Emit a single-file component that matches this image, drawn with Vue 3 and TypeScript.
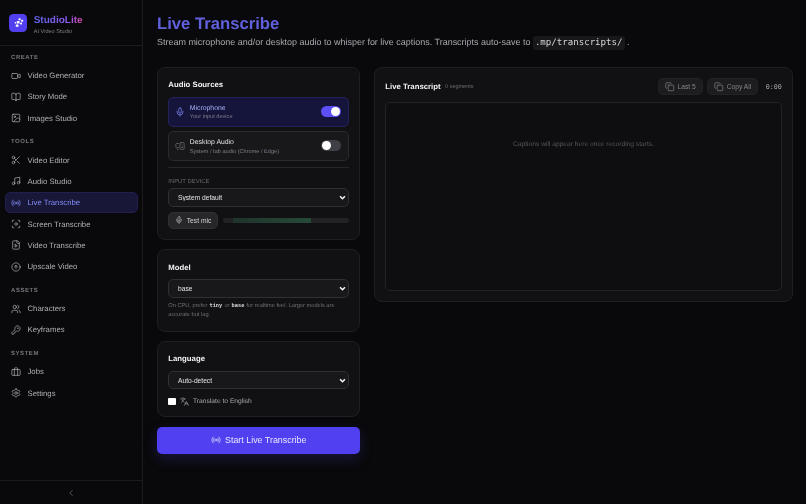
<script setup lang="ts">
const icons: Record<string, string> = {
  video: '<path d="m16 13 5.223 3.482a.5.5 0 0 0 .777-.416V7.87a.5.5 0 0 0-.752-.432L16 10.5"/><rect x="2" y="6" width="14" height="12" rx="2"/>',
  book: '<path d="M12 7v14"/><path d="M3 18a1 1 0 0 1-1-1V4a1 1 0 0 1 1-1h5a4 4 0 0 1 4 4 4 4 0 0 1 4-4h5a1 1 0 0 1 1 1v13a1 1 0 0 1-1 1h-6a3 3 0 0 0-3 3 3 3 0 0 0-3-3z"/>',
  image: '<rect width="18" height="18" x="3" y="3" rx="2"/><circle cx="9" cy="9" r="2"/><path d="m21 15-3.086-3.086a2 2 0 0 0-2.828 0L6 21"/>',
  scissors: '<circle cx="6" cy="6" r="3"/><path d="M8.12 8.12 12 12"/><path d="M20 4 8.12 15.88"/><circle cx="6" cy="18" r="3"/><path d="M14.8 14.8 20 20"/>',
  music: '<path d="M9 18V5l12-2v13"/><circle cx="6" cy="18" r="3"/><circle cx="18" cy="16" r="3"/>',
  radio: '<path d="M4.9 19.1C1 15.2 1 8.8 4.9 4.9"/><path d="M7.8 16.2c-2.3-2.3-2.3-6.1 0-8.5"/><circle cx="12" cy="12" r="2"/><path d="M16.2 7.8c2.3 2.3 2.3 6.1 0 8.5"/><path d="M19.1 4.9C23 8.8 23 15.1 19.1 19"/>',
  scan: '<path d="M3 7V5a2 2 0 0 1 2-2h2"/><path d="M17 3h2a2 2 0 0 1 2 2v2"/><path d="M21 17v2a2 2 0 0 1-2 2h-2"/><path d="M7 21H5a2 2 0 0 1-2-2v-2"/><circle cx="12" cy="12" r="3"/>',
  file: '<path d="M15 2H6a2 2 0 0 0-2 2v16a2 2 0 0 0 2 2h12a2 2 0 0 0 2-2V7Z"/><path d="M14 2v4a2 2 0 0 0 2 2h4"/><path d="m10 11 5 3-5 3v-6Z"/>',
  upscale: '<circle cx="12" cy="12" r="10"/><path d="m16 12-4-4-4 4"/><path d="M12 16V8"/>',
  users: '<path d="M16 21v-2a4 4 0 0 0-4-4H6a4 4 0 0 0-4 4v2"/><circle cx="9" cy="7" r="4"/><path d="M22 21v-2a4 4 0 0 0-3-3.87"/><path d="M16 3.13a4 4 0 0 1 0 7.75"/>',
  key: '<path d="M2.586 17.414A2 2 0 0 0 2 18.828V21a1 1 0 0 0 1 1h3a1 1 0 0 0 1-1v-1a1 1 0 0 1 1-1h1a1 1 0 0 0 1-1v-1a1 1 0 0 1 1-1h.172a2 2 0 0 0 1.414-.586l.814-.814a6.5 6.5 0 1 0-4-4z"/><circle cx="16.5" cy="7.5" r=".5" fill="currentColor"/>',
  jobs: '<path d="M16 20V4a2 2 0 0 0-2-2h-4a2 2 0 0 0-2 2v16"/><rect width="20" height="14" x="2" y="6" rx="2"/>',
  settings: '<path d="M12.22 2h-.44a2 2 0 0 0-2 2v.18a2 2 0 0 1-1 1.73l-.43.25a2 2 0 0 1-2 0l-.15-.08a2 2 0 0 0-2.73.73l-.22.38a2 2 0 0 0 .73 2.73l.15.1a2 2 0 0 1 1 1.72v.51a2 2 0 0 1-1 1.74l-.15.09a2 2 0 0 0-.73 2.73l.22.38a2 2 0 0 0 2.73.73l.15-.08a2 2 0 0 1 2 0l.43.25a2 2 0 0 1 1 1.73V20a2 2 0 0 0 2 2h.44a2 2 0 0 0 2-2v-.18a2 2 0 0 1 1-1.73l.43-.25a2 2 0 0 1 2 0l.15.08a2 2 0 0 0 2.73-.73l.22-.39a2 2 0 0 0-.73-2.73l-.15-.08a2 2 0 0 1-1-1.74v-.5a2 2 0 0 1 1-1.74l.15-.09a2 2 0 0 0 .73-2.73l-.22-.38a2 2 0 0 0-2.73-.73l-.15.08a2 2 0 0 1-2 0l-.43-.25a2 2 0 0 1-1-1.73V4a2 2 0 0 0-2-2z"/><circle cx="12" cy="12" r="3"/>',
  mic: '<path d="M12 19v3"/><path d="M19 10v2a7 7 0 0 1-14 0v-2"/><rect x="9" y="2" width="6" height="13" rx="3"/>',
  speaker: '<path d="M5.5 20H8"/><path d="M17 9h.01"/><rect width="10" height="16" x="12" y="4" rx="2"/><path d="M8 6H4a2 2 0 0 0-2 2v6a2 2 0 0 0 2 2h4"/><circle cx="17" cy="15" r="1"/>',
  copy: '<rect width="14" height="14" x="8" y="8" rx="2" ry="2"/><path d="M4 16c-1.1 0-2-.9-2-2V4c0-1.1.9-2 2-2h10c1.1 0 2 .9 2 2"/>',
  languages: '<path d="m5 8 6 6"/><path d="m4 14 6-6 2-3"/><path d="M2 5h12"/><path d="M7 2h1"/><path d="m22 22-5-10-5 10"/><path d="M14 18h6"/>',
  chevron: '<path d="m15 18-6-6 6-6"/>',
}

const nav = [
  { title: 'Create', items: [
    { label: 'Video Generator', icon: 'video' },
    { label: 'Story Mode', icon: 'book' },
    { label: 'Images Studio', icon: 'image' },
  ] },
  { title: 'Tools', items: [
    { label: 'Video Editor', icon: 'scissors' },
    { label: 'Audio Studio', icon: 'music' },
    { label: 'Live Transcribe', icon: 'radio', active: true },
    { label: 'Screen Transcribe', icon: 'scan' },
    { label: 'Video Transcribe', icon: 'file' },
    { label: 'Upscale Video', icon: 'upscale' },
  ] },
  { title: 'Assets', items: [
    { label: 'Characters', icon: 'users' },
    { label: 'Keyframes', icon: 'key' },
  ] },
  { title: 'System', items: [
    { label: 'Jobs', icon: 'jobs' },
    { label: 'Settings', icon: 'settings' },
  ] },
]
</script>

<template>
  <div class="app">
    <aside class="sidebar">
      <div class="brand">
        <div class="logo">
          <svg viewBox="0 0 24 24" fill="#fff">
            <rect x="12" y="4" width="4" height="4" rx="1" />
            <rect x="17" y="7" width="3.5" height="3.5" rx="1" />
            <rect x="9" y="9" width="5" height="5" rx="1" />
            <rect x="15" y="12" width="3.5" height="3.5" rx="1" />
            <rect x="5" y="11" width="3" height="3" rx="1" />
            <rect x="7" y="15.5" width="5" height="4.5" rx="1" />
          </svg>
        </div>
        <div class="brand-text">
          <div class="brand-name">StudioLite</div>
          <div class="brand-sub">AI Video Studio</div>
        </div>
      </div>

      <nav class="nav">
        <section v-for="group in nav" :key="group.title" class="nav-group">
          <div class="nav-title">{{ group.title }}</div>
          <a
            v-for="item in group.items"
            :key="item.label"
            class="nav-item"
            :class="{ active: item.active }"
          >
            <svg class="icon" viewBox="0 0 24 24" v-html="icons[item.icon]"></svg>
            {{ item.label }}
          </a>
        </section>
      </nav>

      <div class="collapse">
        <svg class="icon" viewBox="0 0 24 24" v-html="icons.chevron"></svg>
      </div>
    </aside>

    <main class="main">
      <h1>Live Transcribe</h1>
      <p class="lead">
        Stream microphone and/or desktop audio to whisper for live captions. Transcripts auto-save to
        <code>.mp/transcripts/</code> .
      </p>

      <div class="columns">
        <div class="left">
          <section class="card">
            <h2>Audio Sources</h2>
            <div class="source on">
              <svg class="icon" viewBox="0 0 24 24" v-html="icons.mic"></svg>
              <div class="source-text">
                <div class="source-name">Microphone</div>
                <div class="source-sub">Your input device</div>
              </div>
              <span class="toggle on"></span>
            </div>
            <div class="source">
              <svg class="icon" viewBox="0 0 24 24" v-html="icons.speaker"></svg>
              <div class="source-text">
                <div class="source-name">Desktop Audio</div>
                <div class="source-sub">System / tab audio (Chrome / Edge)</div>
              </div>
              <span class="toggle"></span>
            </div>
            <hr />
            <label class="field-label">INPUT DEVICE</label>
            <select class="select"><option>System default</option></select>
            <div class="test-row">
              <button class="test-btn">
                <svg class="icon" viewBox="0 0 24 24" v-html="icons.mic"></svg>
                Test mic
              </button>
              <div class="meter"><div class="meter-fill"></div></div>
            </div>
          </section>

          <section class="card">
            <h2>Model</h2>
            <select class="select"><option>base</option></select>
            <p class="hint">
              On CPU, prefer <code>tiny</code> or <code>base</code> for realtime feel. Larger models are accurate but lag.
            </p>
          </section>

          <section class="card">
            <h2>Language</h2>
            <select class="select"><option>Auto-detect</option></select>
            <label class="check">
              <input type="checkbox" />
              <svg class="icon" viewBox="0 0 24 24" v-html="icons.languages"></svg>
              Translate to English
            </label>
          </section>

          <button class="start">
            <svg class="icon" viewBox="0 0 24 24" v-html="icons.radio"></svg>
            Start Live Transcribe
          </button>
        </div>

        <section class="card transcript">
          <div class="transcript-head">
            <h2>Live Transcript</h2>
            <span class="segments">0 segments</span>
            <button class="ghost">
              <svg class="icon" viewBox="0 0 24 24" v-html="icons.copy"></svg>
              Last 5
            </button>
            <button class="ghost">
              <svg class="icon" viewBox="0 0 24 24" v-html="icons.copy"></svg>
              Copy All
            </button>
            <span class="timer">0:00</span>
          </div>
          <div class="captions">Captions will appear here once recording starts.</div>
        </section>
      </div>
    </main>
  </div>
</template>

<style>
html, body {
  margin: 0;
  background: #09090b;
}
</style>

<style scoped>
.app {
  display: flex;
  width: 806px;
  height: 504px;
  overflow: hidden;
  background: #09090b;
  color: #e4e4e7;
  font-family: "Liberation Sans", Arial, sans-serif;
  text-rendering: geometricPrecision;
}

.icon {
  flex: none;
  width: 10px;
  height: 10px;
  fill: none;
  stroke: currentColor;
  stroke-width: 1.7;
  stroke-linecap: round;
  stroke-linejoin: round;
}

/* sidebar */
.sidebar {
  flex: none;
  display: flex;
  flex-direction: column;
  width: 143px;
  box-sizing: border-box;
  border-right: 1px solid #1b1b1f;
  will-change: transform;
}

.brand {
  flex: none;
  display: flex;
  align-items: center;
  gap: 6.7px;
  height: 46px;
  padding-left: 9px;
  box-sizing: border-box;
  border-bottom: 1px solid #1b1b1f;
}

.logo {
  display: flex;
  align-items: center;
  justify-content: center;
  width: 18px;
  height: 18px;
  border-radius: 4.5px;
  background: #5240f0;
}

.logo svg {
  width: 13px;
  height: 13px;
}

.brand-text {
  margin-top: 5px;
}

.brand-name {
  font-size: 10px;
  font-weight: 700;
  line-height: 12px;
  background: linear-gradient(90deg, #5f63e8, #8b5cf6 65%, #d946a8);
  -webkit-background-clip: text;
  background-clip: text;
  color: transparent;
}

.brand-sub {
  margin-top: 1px;
  font-size: 5.6px;
  line-height: 8px;
  color: #7c7c85;
}

.nav {
  flex: 1;
  padding: 7px 4.5px 0;
}

.nav-group + .nav-group {
  margin-top: 8.5px;
}

.nav-title {
  height: 10px;
  padding-left: 6.5px;
  font-size: 6px;
  line-height: 10px;
  font-weight: 700;
  letter-spacing: 0.55px;
  text-transform: uppercase;
  color: #74747c;
}

.nav-item {
  display: flex;
  align-items: center;
  gap: 6.3px;
  height: 21.33px;
  padding-left: 6.7px;
  border-radius: 5px;
  font-size: 7.78px;
  color: #aeaeb6;
  box-sizing: border-box;
}

.nav-title + .nav-item {
  margin-top: 2px;
}

.nav-item.active {
  background: #191737;
  border: 1px solid #221f4e;
  padding-left: 5.7px;
  color: #818cf8;
}

.collapse {
  flex: none;
  display: flex;
  align-items: center;
  justify-content: center;
  height: 23px;
  border-top: 1px solid #1b1b1f;
  color: #71717a;
}

/* main */
.main {
  flex: 1;
  min-width: 0;
  padding: 13px 13px 0 14px;
  box-sizing: border-box;
  will-change: transform;
}

h1 {
  margin: 0;
  font-size: 16.67px;
  line-height: 22px;
  font-weight: 700;
  color: #6060dd;
}

.lead {
  height: 15px;
  margin: 0;
  font-size: 8.97px;
  line-height: 15px;
  color: #a8a8b0;
}

.lead code {
  display: inline-block;
  padding: 0 2px;
  line-height: 14px;
  border-radius: 3px;
  background: #18181b;
  font-family: "DejaVu Sans Mono", monospace;
  font-size: 9.1px;
  color: #d4d4d8;
}

.columns {
  display: flex;
  align-items: flex-start;
  gap: 14px;
  margin-top: 17px;
}

.left {
  flex: none;
  display: flex;
  flex-direction: column;
  gap: 9.4px;
  width: 203px;
}

.card {
  padding: 10.3px;
  border: 1px solid #1f1f23;
  border-radius: 8px;
  background: #111114;
}

h2 {
  margin: 0.8px 0 5.6px;
  font-size: 7.78px;
  line-height: 12px;
  font-weight: 700;
  color: #f4f4f5;
}

.source {
  display: flex;
  align-items: center;
  gap: 4.5px;
  height: 30px;
  padding: 0 6.3px 0 6px;
  border: 1px solid #2a2a2e;
  border-radius: 5px;
  background: #18181b;
  box-sizing: border-box;
  color: #71717a;
}

.source + .source {
  margin-top: 4.3px;
}

.source.on {
  background: #15143a;
  border-color: #24225a;
  color: #818cf8;
}

.source-text {
  flex: 1;
  min-width: 0;
  padding-top: 2.5px;
}

.source-name {
  font-size: 6.85px;
  line-height: 9.5px;
  color: #e4e4e7;
}

.source.on .source-name {
  color: #a5b4fc;
}

.source-sub {
  font-size: 5.6px;
  line-height: 8.5px;
  color: #7c7c85;
}

.toggle {
  position: relative;
  flex: none;
  width: 20px;
  height: 11px;
  border-radius: 6px;
  background: #3f3f46;
}

.toggle::after {
  content: "";
  position: absolute;
  top: 1px;
  left: 1px;
  width: 9px;
  height: 9px;
  border-radius: 50%;
  background: #fff;
}

.toggle.on {
  background: #5b4ff5;
}

.toggle.on::after {
  left: 10px;
}

hr {
  height: 1px;
  margin: 6.3px 0 9.5px;
  border: 0;
  background: #26262a;
}

.field-label {
  display: block;
  margin-bottom: 1.5px;
  font-size: 5.9px;
  line-height: 9px;
  color: #66666e;
}

.select {
  display: block;
  width: 100%;
  height: 18.5px;
  padding: 0 8.7px;
  appearance: none;
  border: 1px solid #2f2f34;
  border-radius: 5px;
  background: #18181b url("data:image/svg+xml,%3Csvg xmlns='http://www.w3.org/2000/svg' viewBox='0 0 10 10'%3E%3Cpath d='M1.5 3.2 5 6.8l3.5-3.6' fill='none' stroke='%23f4f4f5' stroke-width='2.2'/%3E%3C/svg%3E") no-repeat right 2px center / 6.5px 6.5px;
  color: #e4e4e7;
  font-family: inherit;
  font-size: 6.67px;
}

.test-row {
  display: flex;
  align-items: center;
  gap: 5px;
  margin-top: 5px;
}

.test-btn {
  flex: none;
  display: flex;
  align-items: center;
  justify-content: center;
  gap: 3.5px;
  width: 50px;
  height: 17px;
  padding: 0;
  border: 1px solid #2f2f34;
  border-radius: 5px;
  background: #27272a;
  color: #d4d4d8;
  font-family: inherit;
  font-size: 6.7px;
}

.test-btn .icon {
  width: 8px;
  height: 8px;
}

.meter {
  flex: 1;
  height: 5.5px;
  overflow: hidden;
  border-radius: 3px;
  background: #222226;
}

.meter-fill {
  width: 61.6%;
  height: 100%;
  margin-left: 8%;
  background: linear-gradient(90deg, #1f332b, #264a38);
}

.hint {
  margin: 4.3px 0 0;
  font-size: 5.67px;
  line-height: 9.3px;
  color: #6e6e76;
}

.hint code {
  margin: 0 0.6px;
  font-family: "DejaVu Sans Mono", monospace;
  font-size: 5.3px;
  font-weight: 700;
  color: #d4d4d8;
}

.check {
  display: flex;
  align-items: center;
  gap: 3.7px;
  height: 9px;
  margin-top: 7.3px;
  font-size: 6.7px;
  color: #a8a8b0;
}

.check input {
  flex: none;
  width: 7.3px;
  height: 7.3px;
  margin: 0 1px 0 0;
  appearance: none;
  border-radius: 1px;
  background: #fff;
}

.check .icon {
  width: 9px;
  height: 9px;
}

.start {
  display: flex;
  align-items: center;
  justify-content: center;
  gap: 4.5px;
  height: 27px;
  margin-top: 0.4px;
  border: 0;
  border-radius: 5px;
  background: #5040f0;
  box-shadow: 0 5px 14px rgba(79, 70, 229, 0.22);
  color: #e8e6ff;
  font-family: inherit;
  font-size: 8.89px;
}

.transcript {
  flex: 1;
  min-width: 0;
  height: 235.3px;
  display: flex;
  flex-direction: column;
  box-sizing: border-box;
}

.transcript-head {
  display: flex;
  align-items: center;
  gap: 4.5px;
  height: 17px;
  margin-bottom: 7px;
}

.transcript-head h2 {
  margin: 0;
}

.segments {
  flex: 1;
  font-size: 5.5px;
  color: #6a6a72;
}

.ghost {
  display: flex;
  align-items: center;
  gap: 3px;
  height: 17px;
  padding: 0 6px;
  border: 1px solid #232327;
  border-radius: 5px;
  background: #1d1d20;
  color: #84848c;
  font-family: inherit;
  font-size: 6.67px;
}

.ghost .icon {
  width: 9.5px;
  height: 9.5px;
}

.timer {
  margin-left: 3px;
  font-family: "DejaVu Sans Mono", monospace;
  font-size: 6.67px;
  color: #a8a8b0;
}

.captions {
  flex: 1;
  padding-top: 38px;
  border: 1px solid #232327;
  border-radius: 5px;
  background: #0e0e10;
  text-align: center;
  font-size: 6.67px;
  color: #55555c;
}
</style>
